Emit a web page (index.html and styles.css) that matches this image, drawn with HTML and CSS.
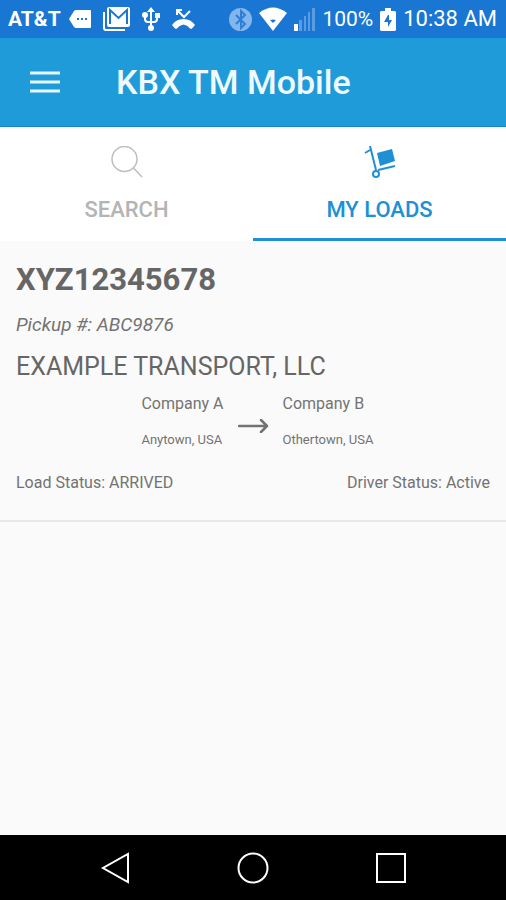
FILE: index.html
```html
<!DOCTYPE html>
<html lang="en">
<head>
<meta charset="utf-8">
<meta name="viewport" content="width=device-width, initial-scale=1">
<title>KBX TM Mobile</title>
<link rel="stylesheet" href="styles.css">
</head>
<body>
<div class="status-bar">
  <div class="status-group status-left">
    <span class="carrier">AT&amp;T</span>
    <svg width="22" height="20" viewBox="0 0 22 20" aria-hidden="true"><path fill="#fff" d="M7 1h14q1 0 1 1v16q0 1-1 1H7q-1 0-2-1L0 10l5-8q1-1 2-1z"/><path fill="#1976d2" d="M8 9h2v2H8zM12 9h2v2h-2zM16 9h2v2h-2z"/></svg>
    <svg width="27" height="24" viewBox="0 0 27 24" aria-hidden="true"><path fill="none" stroke="#fff" stroke-width="2" d="M1 5v16q0 2 2 2h19"/><path fill="#fff" d="M6 0h19q2 0 2 2v16q0 2-2 2H6q-2 0-2-2V2q0-2 2-2z"/><path fill="none" stroke="#1976d2" stroke-width="2" d="M7 17V3l8.500 8L24 3v14"/></svg>
    <svg width="18" height="24" viewBox="0 0 18 24" aria-hidden="true"><g fill="none" stroke="#fff" stroke-width="2"><path d="M9 3v18M3 7v5q0 3 3 3h6q3 0 3-3V7"/></g><path fill="#fff" d="M9 0l4 5H5zM3 5a3 3 0 1 1 0 6a3 3 0 0 1 0-6M13 6h5v5h-5z"/><circle cx="9" cy="21" r="3" fill="#fff"/></svg>
    <svg width="23" height="20" viewBox="0 0 23 20" aria-hidden="true"><path fill="none" stroke="#fff" stroke-width="2" d="M5 6V1h5M5 1l7 7 6-6"/><path fill="#fff" d="M0 16q4-6 11.500-6T23 16l-3 3.500q-1 .5-2 0-2-3-6.500-4-4.500 1-6.500 4-1 .5-2 0z"/></svg>
  </div>
  <div class="status-group status-right">
    <svg width="23" height="23" viewBox="0 0 23 23" aria-hidden="true"><circle cx="11.500" cy="11.500" r="11.500" fill="#82b6ec"/><path fill="none" stroke="#2f7fd4" stroke-width="2" d="M7 7l9 9-4 4V3l4 4-9 9"/></svg>
    <svg width="28" height="24" viewBox="0 0 28 24" aria-hidden="true"><path fill="#fff" d="M0 6q14-11 28 0L14 24z"/><path fill="#1976d2" d="M11 13q3-1 6 0l-3 3z"/></svg>
    <svg width="21" height="24" viewBox="0 0 21 24" aria-hidden="true"><path fill="#fff" d="M0 17h4v7H0z"/><path fill="#5b9be3" d="M5 13h3v11H5zM10 9h2v15h-2zM14 5h2v19h-2zM18 1h3v23h-3z"/></svg>
    <span class="charge">100%</span>
    <svg width="16" height="23" viewBox="0 0 16 23" aria-hidden="true"><path fill="#fff" d="M5 0h6v3h4l1 1v18l-1 1H1l-1-1V4l1-1h4z"/><path fill="#1976d2" d="M9 7v5h3l-4 7v-5H4l4-7z"/></svg>
    <span class="clock">10:38 AM</span>
  </div>
</div>
<header class="app-bar">
  <button class="menu-button" type="button" aria-label="Menu"><svg width="30" height="22" viewBox="0 0 30 22"><path stroke="#e4f7ff" stroke-width="3" d="M0 2h30M0 11h30M0 20h30"/></svg></button>
  <h1 class="app-title">KBX TM Mobile</h1>
</header>
<nav class="tabs">
  <a class="tab" href="#search">
    <svg width="32" height="32" viewBox="0 0 32 32" aria-hidden="true"><g fill="none" stroke="#bdbdbd" stroke-width="1.500"><circle cx="13.500" cy="13" r="12.500"/><path d="M22.500 22L31 31"/></g></svg>
    <span>SEARCH</span>
  </a>
  <a class="tab tab-active" href="#loads" aria-current="page">
    <svg width="32" height="32" viewBox="0 0 32 32" aria-hidden="true"><g fill="none" stroke="#2090d4" stroke-width="2"><path d="M1 7l5-3M6 0l6 24M14 24l17-4"/><circle cx="12" cy="28" r="3"/></g><path fill="#2090d4" d="M13 7l15-4 3 12-15 5z"/></svg>
    <span>MY LOADS</span>
  </a>
</nav>
<main class="loads">
  <article class="load">
    <h2 class="load-id">XYZ12345678</h2>
    <p class="pickup">Pickup #: ABC9876</p>
    <p class="carrier-name">EXAMPLE TRANSPORT, LLC</p>
    <div class="route">
      <div class="stop stop-from"><p class="company">Company A</p><p class="city">Anytown, USA</p></div>
      <svg class="arrow" width="31" height="14" viewBox="0 0 31 14" role="img" aria-label="to"><path fill="none" stroke="#737373" stroke-width="2.500" stroke-linecap="round" stroke-linejoin="round" d="M1 7h28M23 1l6 6-6 6"/></svg>
      <div class="stop"><p class="company">Company B</p><p class="city">Othertown, USA</p></div>
    </div>
    <div class="statuses"><span>Load Status: ARRIVED</span><span>Driver Status: Active</span></div>
  </article>
</main>
<div class="system-nav">
  <button type="button" aria-label="Back"><svg width="32" height="32" viewBox="0 0 32 32"><path fill="none" stroke="#fff" stroke-width="2" d="M29 2v28L4 16z"/></svg></button>
  <button type="button" aria-label="Home"><svg width="32" height="32" viewBox="0 0 32 32"><circle cx="16" cy="16" r="14.500" fill="none" stroke="#fff" stroke-width="2"/></svg></button>
  <button type="button" aria-label="Recent apps"><svg width="32" height="32" viewBox="0 0 32 32"><path fill="none" stroke="#fff" stroke-width="2" d="M2 2h28v28H2z"/></svg></button>
</div>
</body>
</html>
```
FILE: styles.css
```css
* {
  box-sizing: border-box;
}

body {
  margin: 0;
  min-height: 100vh;
  display: flex;
  flex-direction: column;
  background: #fafafa;
  color: #737373;
  font-family: Roboto, "Liberation Sans", sans-serif;
}

h1, h2, p {
  margin: 0;
}

svg {
  display: block;
  flex: none;
}

button {
  padding: 0;
  border: 0;
  background: none;
}

.status-bar {
  display: flex;
  justify-content: space-between;
  padding: 0 9px 0 8px;
  background: #1976d2;
  color: #fff;
  font-size: 21px;
  line-height: 38px;
}

.status-group {
  display: flex;
  align-items: center;
}

.status-left {
  gap: 12px;
}

.status-right {
  gap: 7px;
}

.carrier {
  margin-right: -4px;
  font-weight: 700;
}

.clock {
  font-size: 22px;
}

.app-bar {
  display: flex;
  align-items: center;
  gap: 56px;
  height: 89px;
  padding: 0 30px;
  border-bottom: 1px solid #1488c8;
  background: #209bda;
}

.app-title {
  color: #eefaff;
  font-size: 34px;
  font-weight: 500;
  line-height: 40px;
}

.tabs {
  display: grid;
  grid-template-columns: 1fr 1fr;
  background: #fff;
}

.tab {
  display: flex;
  flex-direction: column;
  align-items: center;
  gap: 18px;
  padding: 19px 0 15px;
  border-bottom: 3px solid transparent;
  color: #b4b4b4;
  font-size: 22px;
  font-weight: 500;
  line-height: 27px;
  text-decoration: none;
}

.tab-active {
  border-bottom-color: #2090d4;
  color: #2090d4;
}

.loads {
  flex: 1;
}

.load {
  padding: 19px 16px 25px;
  border-bottom: 2px solid #e8e8e8;
}

.load-id {
  color: #666;
  font-size: 31px;
  font-weight: 700;
  line-height: 40px;
}

.pickup {
  margin-top: 13px;
  font-size: 19px;
  font-style: italic;
  line-height: 24px;
}

.carrier-name {
  margin-top: 14px;
  color: #666;
  font-size: 25px;
  line-height: 32px;
}

.route {
  display: grid;
  grid-template-columns: 1fr auto 1fr;
  align-items: end;
  gap: 14px;
  margin-top: 11px;
}

.stop-from {
  justify-self: end;
}

.arrow {
  margin-bottom: 15px;
}

.company {
  font-size: 16px;
  line-height: 20px;
}

.city {
  margin-top: 18px;
  font-size: 13px;
  line-height: 16px;
}

.statuses {
  display: flex;
  justify-content: space-between;
  margin-top: 23px;
  font-size: 16px;
  line-height: 24px;
}

.system-nav {
  display: flex;
  justify-content: center;
  align-items: center;
  gap: 106px;
  height: 65px;
  background: #000;
}
```
